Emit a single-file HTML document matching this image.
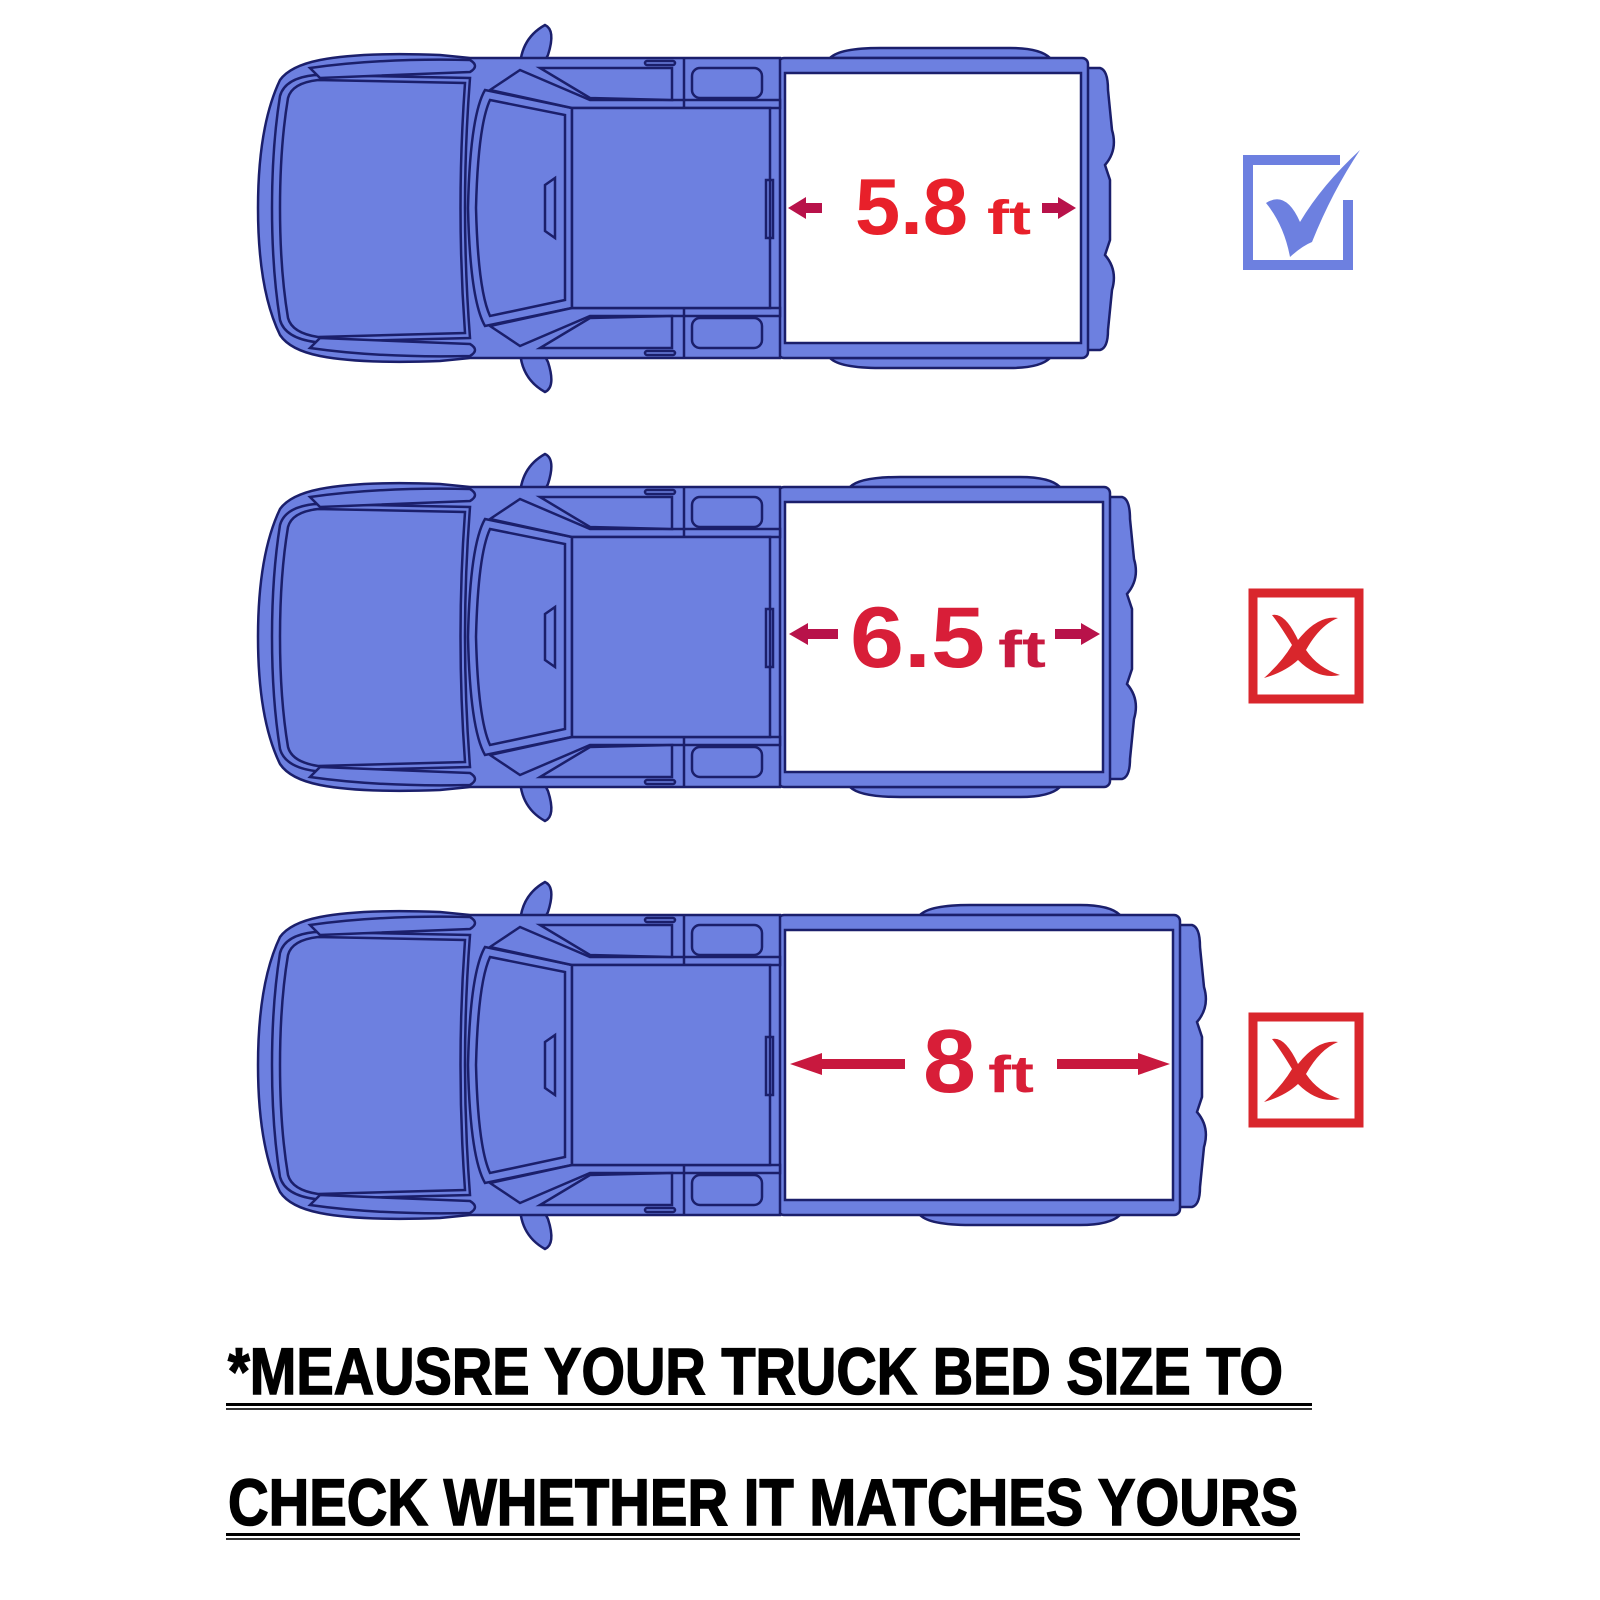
<!DOCTYPE html>
<html><head><meta charset="utf-8"><style>html,body{margin:0;padding:0;background:#fff}svg{display:block}</style></head>
<body>
<svg width="1600" height="1600" viewBox="0 0 1600 1600" xmlns="http://www.w3.org/2000/svg">
<defs>
<g id="cab" stroke="#1b1f6b" stroke-width="2.5" fill="#6d80e0">
  <path d="M520 75 Q518 40 545 25 Q556 30 548 55 L535 80 Z"/>
  <path d="M520 342 Q518 377 545 392 Q556 387 548 362 L535 337 Z"/>
  <path d="M320 60 Q360 52 440 55 L470 58 L780 58 L780 358 L470 358 L440 361 Q360 364 320 356 Q290 350 280 335 Q258 290 258 208 Q258 126 280 80 Q290 66 320 60 Z"/>
  <path d="M315 75 L470 78 Q460 208 470 338 L315 342 Q285 338 280 320 Q272 270 272 208 Q272 146 280 96 Q285 78 315 75 Z"/>
  <path d="M318 80 L465 83 Q456 208 465 333 L318 337 Q292 333 288 318 Q280 270 280 208 Q280 146 288 98 Q292 83 318 80 Z" fill="none"/>
  <path d="M310 68 Q380 58 470 60 Q480 66 470 72 L320 78 Z"/>
  <path d="M310 348 Q380 358 470 356 Q480 350 470 344 L320 338 Z"/>
  <path d="M485 90 L572 108 L572 308 L485 326 Q470 300 468 208 Q470 116 485 90 Z"/>
  <path d="M490 100 L565 115 L565 300 L490 316 Q478 290 476 208 Q478 126 490 100 Z"/>
  <path d="M545 185 L555 178 L555 238 L545 231 Z" fill="none"/>
  <path d="M490 90 L520 70 L590 100 L780 100 L780 108 L572 108 Z"/>
  <path d="M490 326 L520 346 L590 316 L780 316 L780 308 L572 308 Z"/>
  <path d="M540 68 L672 68 L672 100 L590 98 Z"/>
  <path d="M540 348 L672 348 L672 316 L590 318 Z"/>
  <line x1="684" y1="58" x2="684" y2="108"/><line x1="684" y1="308" x2="684" y2="358"/>
  <rect x="692" y="68" width="70" height="30" rx="8"/>
  <rect x="692" y="318" width="70" height="30" rx="8"/>
  <rect x="645" y="61" width="30" height="4" rx="2"/><rect x="645" y="351" width="30" height="4" rx="2"/>
  <path d="M572 108 L770 108 L770 308 L572 308 Z"/>
  <rect x="766" y="180" width="7" height="58" fill="none"/>
</g>
</defs>

<g>
  <g stroke="#1b1f6b" stroke-width="2.5" fill="#6d80e0">
    <path d="M830 58 Q840 48 880 48 L1010 48 Q1040 48 1050 58 Z"/>
    <path d="M830 358 Q840 368 880 368 L1010 368 Q1040 368 1050 358 Z"/>
    <path d="M1080 68 L1100 68 Q1108 70 1108 90 L1112 130 Q1118 150 1105 165 L1110 180 L1110 240 L1105 255 Q1118 270 1112 290 L1108 330 Q1108 348 1100 350 L1080 350 Z"/>
    <rect x="778" y="58" width="310" height="300" rx="6"/>
  </g>
  <use href="#cab"/>
  <rect x="785" y="73" width="296" height="270" fill="#fff" stroke="#1b1f6b" stroke-width="2.5"/>
  <path d="M788 208 L806 197 L806 203 L822 203 L822 213 L806 213 L806 219 Z" fill="#b8124a"/>
  <path d="M1076 208 L1058 197 L1058 203 L1042 203 L1042 213 L1058 213 L1058 219 Z" fill="#b8124a"/>
  <text x="855" y="234" font-family="Liberation Sans" font-weight="bold" font-size="80" fill="#e8202a" textLength="113" lengthAdjust="spacingAndGlyphs">5.8</text>
  <text x="987" y="234" font-family="Liberation Sans" font-weight="bold" font-size="48" fill="#e8202a" textLength="44" lengthAdjust="spacingAndGlyphs">ft</text>
</g>

<g transform="translate(0,429)">
  <g stroke="#1b1f6b" stroke-width="2.5" fill="#6d80e0">
    <path d="M850 58 Q860 48 900 48 L1020 48 Q1050 48 1060 58 Z"/>
    <path d="M850 358 Q860 368 900 368 L1020 368 Q1050 368 1060 358 Z"/>
    <path d="M1100 68 L1122 68 Q1130 70 1130 90 L1134 130 Q1140 150 1127 165 L1132 180 L1132 240 L1127 255 Q1140 270 1134 290 L1130 330 Q1130 348 1122 350 L1100 350 Z"/>
    <rect x="778" y="58" width="332" height="300" rx="6"/>
  </g>
  <use href="#cab"/>
  <rect x="785" y="73" width="318" height="270" fill="#fff" stroke="#1b1f6b" stroke-width="2.5"/>
  <path d="M789 205 L808 194 L808 200 L838 200 L838 210 L808 210 L808 216 Z" fill="#b8124a"/>
  <path d="M1100 205 L1081 194 L1081 200 L1055 200 L1055 210 L1081 210 L1081 216 Z" fill="#b8124a"/>
  <text x="850" y="238" font-family="Liberation Sans" font-weight="bold" font-size="86" fill="#d81e38" textLength="135" lengthAdjust="spacingAndGlyphs">6.5</text>
  <text x="998" y="238" font-family="Liberation Sans" font-weight="bold" font-size="52" fill="#c81a40" textLength="48" lengthAdjust="spacingAndGlyphs">ft</text>
</g>

<g transform="translate(0,857)">
  <g stroke="#1b1f6b" stroke-width="2.5" fill="#6d80e0">
    <path d="M920 58 Q930 48 970 48 L1080 48 Q1110 48 1120 58 Z"/>
    <path d="M920 358 Q930 368 970 368 L1080 368 Q1110 368 1120 358 Z"/>
    <path d="M1170 68 L1192 68 Q1200 70 1200 90 L1204 130 Q1210 150 1197 165 L1202 180 L1202 240 L1197 255 Q1210 270 1204 290 L1200 330 Q1200 348 1192 350 L1170 350 Z"/>
    <rect x="778" y="58" width="402" height="300" rx="6"/>
  </g>
  <use href="#cab"/>
  <rect x="785" y="73" width="388" height="270" fill="#fff" stroke="#1b1f6b" stroke-width="2.5"/>
  <path d="M790 207 L822 196 L822 202 L905 202 L905 212 L822 212 L822 218 Z" fill="#c8183e"/>
  <path d="M1170 207 L1138 196 L1138 202 L1057 202 L1057 212 L1138 212 L1138 218 Z" fill="#c8183e"/>
  <text x="923" y="235" font-family="Liberation Sans" font-weight="bold" font-size="90" fill="#d81e38" textLength="53" lengthAdjust="spacingAndGlyphs">8</text>
  <text x="988" y="235" font-family="Liberation Sans" font-weight="bold" font-size="52" fill="#d81e38" textLength="46" lengthAdjust="spacingAndGlyphs">ft</text>
</g>

<path d="M1340 160 L1248 160 L1248 265 L1348 265 L1348 200" fill="none" stroke="#6d80e0" stroke-width="10"/>
<path d="M1266 203 Q1286 190 1300 222 Q1322 185 1360 150 Q1332 192 1312 242 Q1302 246 1290 257 Q1284 225 1266 203 Z" fill="#6d80e0"/>

<rect x="1253" y="593" width="106" height="106" fill="none" stroke="#d9262c" stroke-width="9"/>
<path d="M1272 615 Q1285 612 1298 640 Q1318 615 1338 618 Q1320 625 1306 650 Q1318 668 1340 675 Q1318 680 1298 660 Q1285 672 1264 678 Q1282 662 1292 645 Q1280 625 1272 615 Z" fill="#d9262c"/>
<rect x="1253" y="1017" width="106" height="106" fill="none" stroke="#d9262c" stroke-width="9"/>
<path d="M1272 1039 Q1285 1036 1298 1064 Q1318 1039 1338 1042 Q1320 1049 1306 1074 Q1318 1092 1340 1099 Q1318 1104 1298 1084 Q1285 1096 1264 1102 Q1282 1086 1292 1069 Q1280 1049 1272 1039 Z" fill="#d9262c"/>

<text x="228" y="1394" font-family="Liberation Sans" font-weight="bold" font-size="66" fill="#000" stroke="#000" stroke-width="1.5" textLength="1055" lengthAdjust="spacingAndGlyphs">*MEAUSRE YOUR TRUCK BED SIZE TO</text>
<rect x="226" y="1403" width="1086" height="3" fill="#000"/>
<rect x="226" y="1408" width="1086" height="2" fill="#333"/>
<text x="228" y="1525" font-family="Liberation Sans" font-weight="bold" font-size="66" fill="#000" stroke="#000" stroke-width="1.5" textLength="1070" lengthAdjust="spacingAndGlyphs">CHECK WHETHER IT MATCHES YOURS</text>
<rect x="226" y="1533" width="1074" height="3" fill="#000"/>
<rect x="226" y="1538" width="1074" height="2" fill="#333"/>
</svg>
</body></html>
